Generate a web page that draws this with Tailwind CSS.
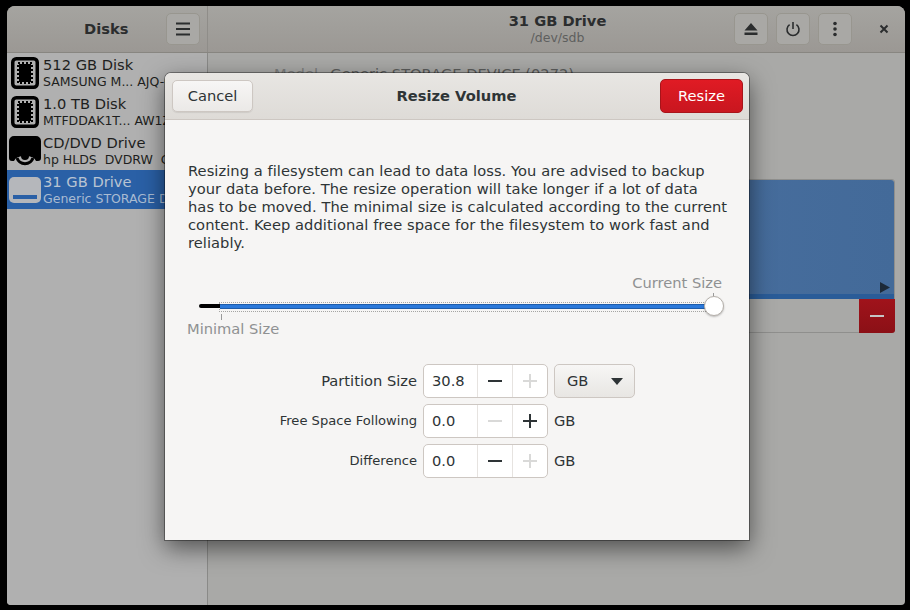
<!DOCTYPE html>
<html lang='en'>
<head>
	<meta charset='UTF-8'>
	<title>Disks - Resize Volume</title>
	<script src="https://cdn.jsdelivr.net/npm/@tailwindcss/browser@4"></script>
</head>
<body class='bg-black w-[910px] h-[610px] overflow-hidden font-["DejaVu_Sans",sans-serif] text-[14.67px] text-[#2e3436]'>
	<div class='pt-[6px] pl-[7px]'>
		<!-- Main window, dimmed behind the dialog -->
		<div class='relative w-[898px] h-[599px] rounded-t-[8px] rounded-b-[4px] overflow-hidden bg-[#a9a9a7] flex flex-col'>
			<header class='h-[47px] shrink-0 flex border-b border-[#888681] bg-gradient-to-b from-[#a5a4a0] to-[#9b9894] text-[#2b2d2e]'>
				<div class='w-[201px] shrink-0 flex items-center border-r border-[#8f8d89] pl-[77px]'>
					<span class='font-bold'>Disks</span>
					<button class='ml-[38px] w-[34px] h-[32px] rounded-[5px] bg-[#a9a8a5] border border-[#98968f] flex items-center justify-center'>
						<svg width='16' height='16' viewBox='0 0 16 16'><path d='M1 2.5h14M1 8h14M1 13.5h14' stroke='#2b2d2e' stroke-width='2'/></svg>
					</button>
				</div>
				<div class='relative flex-1 flex items-center justify-end pr-[53px] gap-[8px]'>
					<div class='absolute left-[249.5px] w-[200px] top-[6px] text-center leading-[18px]'>
						<div class='font-bold'>31 GB Drive</div>
						<div class='text-[12.5px] text-[#5e5f5e] leading-[15px]'>/dev/sdb</div>
					</div>
					<button class='w-[34px] h-[32px] rounded-[5px] bg-[#a9a8a5] border border-[#98968f] flex items-center justify-center'>
						<svg width='16' height='16' viewBox='0 0 16 16'><path d='M8 2l6.5 7.5h-13z M1.5 11.5h13v2.5h-13z' fill='#2b2d2e'/></svg>
					</button>
					<button class='w-[34px] h-[32px] rounded-[5px] bg-[#a9a8a5] border border-[#98968f] flex items-center justify-center'>
						<svg width='16' height='16' viewBox='0 0 16 16' fill='none' stroke='#2b2d2e' stroke-width='1.6'><path d='M4.6 3.6a6 6 0 1 0 6.8 0'/><path d='M8 1v7'/></svg>
					</button>
					<button class='w-[34px] h-[32px] rounded-[5px] bg-[#a9a8a5] border border-[#98968f] flex items-center justify-center'>
						<svg width='16' height='16' viewBox='0 0 16 16' fill='#2b2d2e'><circle cx='8' cy='2.5' r='1.8'/><circle cx='8' cy='8' r='1.8'/><circle cx='8' cy='13.5' r='1.8'/></svg>
					</button>
					<svg class='absolute right-[16px] top-[18px]' width='10' height='10' viewBox='0 0 10 10'><path d='M1.5 1.5l7 7M8.5 1.5l-7 7' stroke='#2b2d2e' stroke-width='2'/></svg>
				</div>
			</header>
			<div class='flex flex-1 min-h-0'>
				<aside class='w-[201px] shrink-0 bg-[#b0b0b0] border-r border-[#8a8a88] overflow-hidden'>
					<div class='h-[39px] flex items-center gap-[4px] pl-[4px] whitespace-nowrap text-[#1e1f20]'>
						<svg class='w-[28px] h-[32px] shrink-0' viewBox='0 0 28 32'><rect x='1.75' y='1.75' width='24.5' height='28.5' rx='3.5' fill='none' stroke='#000' stroke-width='3.5'/><rect x='7' y='6' width='14' height='20' fill='none' stroke='#000' stroke-width='2' stroke-dasharray='2 2'/><rect x='8' y='7' width='12' height='18' fill='#000'/></svg>
						<div>
							<div class='leading-[17px]'>512 GB Disk</div>
							<div class='mt-px text-[12.5px] leading-[16px]'>SAMSUNG M... AJQ-0</div>
						</div>
					</div>
					<div class='h-[39px] flex items-center gap-[4px] pl-[4px] whitespace-nowrap text-[#1e1f20]'>
						<svg class='w-[28px] h-[32px] shrink-0' viewBox='0 0 28 32'><rect x='1.75' y='1.75' width='24.5' height='28.5' rx='3.5' fill='none' stroke='#000' stroke-width='3.5'/><rect x='7' y='6' width='14' height='20' fill='none' stroke='#000' stroke-width='2' stroke-dasharray='2 2'/><rect x='8' y='7' width='12' height='18' fill='#000'/></svg>
						<div>
							<div class='leading-[17px]'>1.0 TB Disk</div>
							<div class='mt-px text-[12.5px] leading-[16px]'>MTFDDAK1T... AW1Z</div>
						</div>
					</div>
					<div class='h-[39px] flex items-center gap-[2px] pl-[2px] whitespace-nowrap text-[#1e1f20]'>
						<svg class='w-[32px] h-[30px] shrink-0' viewBox='0 0 32 30'><path d='M5 0h22a5 5 0 0 1 5 5v17q0 3-3 3h-2q-2-5-11-5t-11 5H3q-3 0-3-3V5a5 5 0 0 1 5-5z' fill='#000'/><path d='M12 20a4 4 0 0 0 8 0z' fill='#000'/><path d='M8 22a8.5 8.5 0 0 0 16 0' fill='none' stroke='#000' stroke-width='3'/></svg>
						<div>
							<div class='leading-[17px]'>CD/DVD Drive</div>
							<div class='mt-px text-[12.5px] leading-[16px]'>hp HLDS&nbsp;&nbsp;DVDRW&nbsp;&nbsp;GU</div>
						</div>
					</div>
					<div class='h-[39px] flex items-center gap-[2px] pl-[2px] whitespace-nowrap bg-[#2a60a6] text-[#b9c4d2]'>
						<svg class='w-[32px] h-[26px] shrink-0' viewBox='0 0 32 26'><rect width='32' height='26' rx='5' fill='#b5b7bb'/><rect x='4' y='18' width='24' height='4' fill='#2a60a6'/></svg>
						<div>
							<div class='leading-[17px]'>31 GB Drive</div>
							<div class='mt-px text-[12.5px] leading-[16px] text-[#a9bbd2]'>Generic STORAGE Drive</div>
						</div>
					</div>
				</aside>
				<main class='flex-1 min-w-0 pr-[10px] pt-[10px]'>
					<div class='pl-[66px] whitespace-nowrap text-[#5c5d5c]'><span class='text-[#7b7c7b] mr-[3px]'>Model</span>&nbsp;&nbsp;Generic STORAGE DEVICE (0272)</div>
					<div class='mt-[94px] h-[154px] border border-[#8f8f8d] rounded-[3px] flex flex-col'>
						<div class='relative h-[119px] rounded-t-[3px] bg-gradient-to-r from-[#3f6694] via-[#4a70a0] to-[#436a99] border-b-[5px] border-[#2a5c98]'>
							<svg class='absolute right-[4px] bottom-[1px]' width='10' height='11' viewBox='0 0 10 11'><path d='M0 0l10 5.5L0 11z' fill='#1d2a38'/></svg>
						</div>
						<div class='flex-1 flex justify-end'>
							<div class='w-[36px] -mr-px -mb-px rounded-br-[3px] bg-gradient-to-b from-[#a0131b] to-[#8b1016] flex items-center justify-center'>
								<div class='w-[14px] h-[2px] bg-[#c5c5c5]'></div>
							</div>
						</div>
					</div>
				</main>
			</div>

			<!-- Resize dialog -->
			<div class='absolute left-[158px] top-[67px] w-[584px] h-[467px] rounded-t-[6px] bg-[#f6f5f4] flex flex-col shadow-[0_0_0_1px_rgba(0,0,0,0.35),0_8px_24px_rgba(0,0,0,0.55)]'>
				<div class='relative h-[47px] shrink-0 flex items-center justify-between pl-[7px] pr-[6px] rounded-t-[6px] border-b border-[#cdc7c2] bg-gradient-to-b from-[#e8e6e3] to-[#dedbd7]'>
					<button class='w-[81px] h-[32px] rounded-[5px] border border-[#cdc7c2] bg-gradient-to-b from-[#f7f6f5] to-[#ebe9e7] shadow-[0_1px_1px_rgba(0,0,0,0.08)]'>Cancel</button>
					<span class='font-bold'>Resize Volume</span>
					<button class='w-[83px] h-[34px] rounded-[5px] border border-[#a8141a] bg-gradient-to-b from-[#e01b24] to-[#c9161f] text-white'>Resize</button>
				</div>
				<div class='flex-1 px-[23px]'>
					<p class='mt-[42px] leading-[18px] whitespace-nowrap tracking-[0.055px] text-[#2e3436]'>Resizing a filesystem can lead to data loss. You are advised to backup<br>your data before. The resize operation will take longer if a lot of data<br>has to be moved. The minimal size is calculated according to the current<br>content. Keep additional free space for the filesystem to work fast and<br>reliably.</p>
					<div class='relative mt-[21px] -ml-[1px] w-[535px] h-[68px] text-[#8f9192]'>
						<div class='absolute right-0 top-0 leading-[20px]'>Current Size</div>
						<div class='absolute left-[526px] top-[20px] w-px h-[4px] bg-[#9a9a9a]'></div>
						<div class='absolute left-[32px] top-[29px] w-[495px] h-[10px] border border-dotted border-[#a5a5a3]'></div>
						<div class='absolute left-[12px] top-[31px] w-[22px] h-[4px] rounded-l-full bg-black'></div>
						<div class='absolute left-[33px] top-[31px] w-[486px] h-[5px] bg-[#2a78da] border-y border-[#1d5cab]'></div>
						<div class='absolute left-[517px] top-[23px] w-[20px] h-[20px] rounded-full bg-white border border-[#b5b0aa] shadow-[0_1px_2px_rgba(0,0,0,0.25)]'></div>
						<div class='absolute left-[34px] top-[41px] w-px h-[6px] bg-[#9a9a9a]'></div>
						<div class='absolute left-0 top-[46px] leading-[20px]'>Minimal Size</div>
					</div>
					<div class='mt-[23px] grid grid-cols-[229px_125px_auto] gap-x-[6px] gap-y-[6px] items-center'>
						<div class='text-right'>Partition Size</div>
						<div class='h-[34px] flex rounded-[5px] border border-[#cdc7c2] bg-white'>
							<div class='w-[53px] pl-[8px] flex items-center'>30.8</div>
							<div class='w-[35px] border-l border-[#e6e3e0] flex items-center justify-center'><svg width='14' height='14' viewBox='0 0 14 14'><path d='M0 7h14' stroke='#2e3436' stroke-width='2'/></svg></div>
							<div class='w-[35px] border-l border-[#e6e3e0] flex items-center justify-center'><svg width='14' height='14' viewBox='0 0 14 14'><path d='M0 7h14M7 0v14' stroke='#d9d9d8' stroke-width='2'/></svg></div>
						</div>
						<button class='w-[81px] h-[34px] flex items-center justify-between pl-[12px] pr-[11px] rounded-[5px] border border-[#cdc7c2] bg-gradient-to-b from-[#f7f6f5] to-[#e8e6e3]'>GB<svg width='12' height='7' viewBox='0 0 12 7'><path d='M0 0h12L6 7z' fill='#2e3436'/></svg></button>
						<div class='text-right text-[13.1px]'>Free Space Following</div>
						<div class='h-[34px] flex rounded-[5px] border border-[#cdc7c2] bg-white'>
							<div class='w-[53px] pl-[8px] flex items-center'>0.0</div>
							<div class='w-[35px] border-l border-[#e6e3e0] flex items-center justify-center'><svg width='14' height='14' viewBox='0 0 14 14'><path d='M0 7h14' stroke='#d9d9d8' stroke-width='2'/></svg></div>
							<div class='w-[35px] border-l border-[#e6e3e0] flex items-center justify-center'><svg width='14' height='14' viewBox='0 0 14 14'><path d='M0 7h14M7 0v14' stroke='#2e3436' stroke-width='2'/></svg></div>
						</div>
						<div>GB</div>
						<div class='text-right text-[13.1px]'>Difference</div>
						<div class='h-[34px] flex rounded-[5px] border border-[#cdc7c2] bg-white'>
							<div class='w-[53px] pl-[8px] flex items-center'>0.0</div>
							<div class='w-[35px] border-l border-[#e6e3e0] flex items-center justify-center'><svg width='14' height='14' viewBox='0 0 14 14'><path d='M0 7h14' stroke='#2e3436' stroke-width='2'/></svg></div>
							<div class='w-[35px] border-l border-[#e6e3e0] flex items-center justify-center'><svg width='14' height='14' viewBox='0 0 14 14'><path d='M0 7h14M7 0v14' stroke='#d9d9d8' stroke-width='2'/></svg></div>
						</div>
						<div>GB</div>
					</div>
				</div>
			</div>
		</div>
	</div>
</body>
</html>
